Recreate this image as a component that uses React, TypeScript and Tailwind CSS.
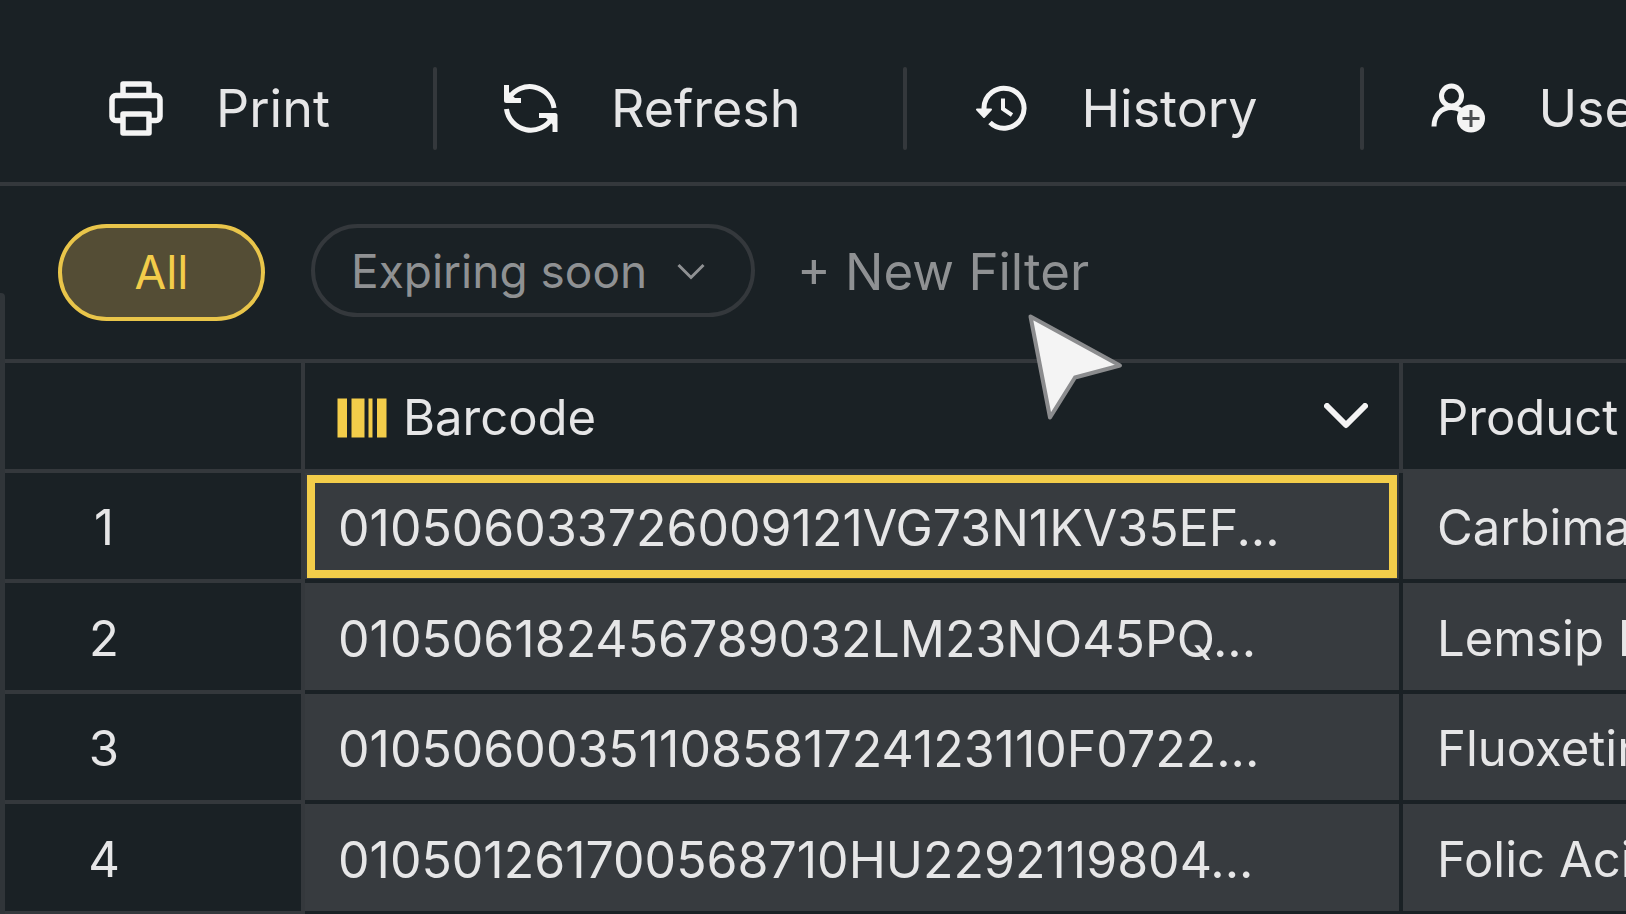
import type { ReactNode } from "react";

/* ─── icons ─── */

function PrintIcon() {
  return (
    <svg viewBox="0 0 56 56" className="size-14" fill="none" stroke="currentColor" strokeWidth="5.5" strokeLinejoin="round" aria-hidden="true">
      <path d="M15 14V3h26v11" />
      <path d="M15 39.500H8a4 4 0 0 1-4-4V18.500a4 4 0 0 1 4-4h40a4 4 0 0 1 4 4v17a4 4 0 0 1-4 4h-7" />
      <path d="M15 33h26v19H15z" />
    </svg>
  );
}

function RefreshIcon() {
  return (
    <svg viewBox="0 0 56 56" className="size-14" fill="none" stroke="currentColor" strokeWidth="5" aria-hidden="true">
      <path d="M51 27A24.500 24.500 0 0 0 6 17" />
      <path d="M3.500 28a24.500 24.500 0 0 0 45.500 9" />
      <path d="M3.500 4v15.500H18" strokeLinejoin="round" />
      <path d="M36 34.500h16V51" strokeLinejoin="round" />
      <path d="M3 19V8l11 11zM52 34v12l-12-12z" fill="currentColor" stroke="none" />
    </svg>
  );
}

function HistoryIcon() {
  return (
    <svg viewBox="-2 0 56 56" className="size-14" fill="none" stroke="currentColor" strokeWidth="5" aria-hidden="true">
      <path d="M9 29v-2a20 20 0 1 1 6 14.500" />
      <path d="M2 28.500h14L9 36z" fill="currentColor" strokeWidth="2" strokeLinejoin="round" />
      <path d="M28 17.500v10.500l9 6" strokeWidth="4" />
    </svg>
  );
}

function UserAddIcon() {
  return (
    <svg viewBox="0 0 56 56" className="size-14" fill="none" stroke="currentColor" strokeWidth="5" aria-hidden="true">
      <circle cx="21.500" cy="15" r="10" />
      <path d="M4 45.500c0-11 7-19 17.500-19 4 0 7 1 10 3" />
      <circle cx="41" cy="37.500" r="14" fill="currentColor" stroke="none" />
      <path d="M41 29v17M32.500 37.500h17" stroke="#4a4d50" strokeWidth="3" />
    </svg>
  );
}

function BarcodeIcon() {
  return (
    <svg viewBox="0 0 50 40" className="h-10 w-[50px] text-[#f3cd4a]" fill="currentColor" aria-hidden="true">
      <path d="M0.500 0.500h9.500v39H0.500zM14.500 0.500h13v39h-13zM31.500 0.500h4v39h-4zM40 0.500h9.500v39H40z" />
    </svg>
  );
}

function Cursor() {
  return (
    <svg viewBox="0 0 100 110" className="pointer-events-none absolute left-[1025px] top-[312px] h-[110px] w-[100px]" aria-hidden="true">
      <path d="M5.500 4.500 95 53.500 50 65.500 25 105.500z" fill="#f4f4f4" stroke="#8b8c8e" strokeWidth="4" strokeLinejoin="round" />
    </svg>
  );
}

/* ─── data ─── */

const ACTIONS: { label: string; icon: ReactNode }[] = [
  { label: "Print", icon: <PrintIcon /> },
  { label: "Refresh", icon: <RefreshIcon /> },
  { label: "History", icon: <HistoryIcon /> },
  { label: "Users", icon: <UserAddIcon /> },
];

const ROWS = [
  { barcode: "010506033726009121VG73N1KV35EF...", product: "Carbimazole" },
  { barcode: "010506182456789032LM23NO45PQ...", product: "Lemsip Max" },
  { barcode: "01050600351108581724123110F0722...", product: "Fluoxetine" },
  { barcode: "010501261700568710HU2292119804...", product: "Folic Acid" },
];

/* ─── page ─── */

export default function App() {
  return (
    <div className="relative h-screen overflow-hidden bg-[#1a2125] font-['Inter',sans-serif] text-[#e6e6e7]">
      {/* toolbar */}
      <header className="flex items-center overflow-hidden border-b-4 border-[#34383c] pt-[67px] pb-8 pl-[42px]">
        {ACTIONS.map((a, i) => (
          <div key={a.label} className="flex shrink-0 items-center">
            {i > 0 && <span className="h-[83px] w-1 rounded-full bg-[#34383c]" />}
            <button type="button" className="flex items-center gap-[52px] pr-[103px] pl-[66px] text-[52px] leading-[64px]">
              <span className="text-[#f4f4f4]">{a.icon}</span>
              {a.label}
            </button>
          </div>
        ))}
      </header>

      {/* filters */}
      <div className="flex h-[173px] items-center text-[#8f9193]">
        <span className="h-[66px] w-[5px] self-end rounded-tr bg-[#303539]" />
        <button
          type="button"
          aria-pressed="true"
          className="ml-[53px] h-[97px] w-[207px] rounded-full border-4 border-[#e9c54a] bg-[#544d35] text-[46px] text-[#f3cd4a]"
        >
          All
        </button>
        <div className="mb-1 ml-[46px] flex h-[93px] w-[444px] items-center justify-between rounded-full border-4 border-[#34383c] pr-[46px] pl-[36px]">
          <select aria-label="Expiry" className="appearance-none bg-transparent text-[46px] leading-[60px]">
            <option>Expiring soon</option>
          </select>
          <svg viewBox="0 0 28 18" className="h-[18px] w-7" fill="none" stroke="currentColor" strokeWidth="3" aria-hidden="true">
            <path d="m1.500 3 12.500 12.500L26.500 3" />
          </svg>
        </div>
        <button type="button" className="ml-[42px] text-[51px] whitespace-nowrap">
          + New Filter
        </button>
      </div>

      {/* grid */}
      <div className="border-l-[5px] border-[#303539]">
        <table className="w-full table-fixed border-separate border-spacing-0 border-t-4 border-[#34383c] text-left text-[49px] leading-[60px] whitespace-nowrap">
          <colgroup>
            <col className="w-[300px]" />
            <col className="w-[1098px]" />
            <col />
          </colgroup>
          <thead>
            <tr className="h-[110px]">
              <td className="border-r-4 border-b-4 border-[#34383c]" />
              <th scope="col" className="border-r-4 border-b-4 border-[#34383c] pt-1 pr-[31px] pl-8 font-normal">
                <div className="flex items-center gap-4">
                  <BarcodeIcon />
                  Barcode
                  <button type="button" aria-label="Sort by barcode" className="mb-1 ml-auto">
                    <svg viewBox="0 0 44 26" className="h-[26px] w-11" fill="none" stroke="#f4f4f4" strokeWidth="6" strokeLinecap="round" strokeLinejoin="round" aria-hidden="true">
                      <path d="m3 3 19 19L41 3" />
                    </svg>
                  </button>
                </div>
              </th>
              <th scope="col" className="overflow-hidden border-b-4 border-[#373b3f] pt-1 pl-[34px] font-normal">Product</th>
            </tr>
          </thead>
          <tbody>
            {ROWS.map((r, i) => (
              <tr key={r.barcode} className="h-[110px] even:h-[111px]">
                <th scope="row" className="border-r-4 border-b-4 border-[#34383c] pt-1 pr-[98px] text-center font-normal">{i + 1}</th>
                <td className="border-r-4 border-b-4 border-[#1a2125] bg-[#373b3f] px-0.5">
                  <div
                    className={`flex h-[103px] items-center border-8 pt-1 pl-[23px] text-[50px] ${
                      i === 0 ? "border-[#f3cd4a]" : "border-transparent"
                    }`}
                  >
                    {r.barcode}
                  </div>
                </td>
                <td className="overflow-hidden border-b-4 border-[#1a2125] bg-[#373b3f] pt-1 pl-[34px]">{r.product}</td>
              </tr>
            ))}
          </tbody>
        </table>
      </div>

      <Cursor />
    </div>
  );
}
